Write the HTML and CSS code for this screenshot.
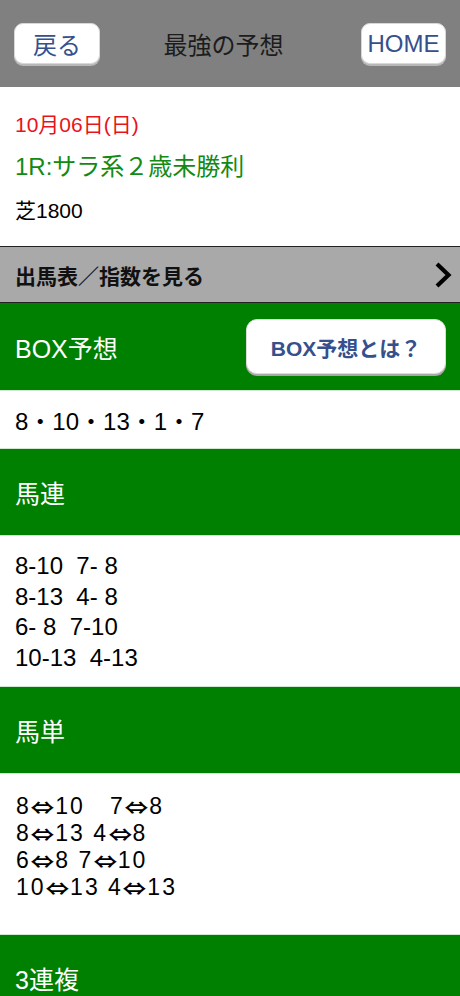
FILE: index.html
```html
<!DOCTYPE html>
<html lang="ja">
<head>
<meta charset="utf-8">
<title>最強の予想</title>
<link rel="stylesheet" href="styles.css">
</head>
<body>
<header class="topbar">
  <a class="navbtn back">戻る</a>
  <h1 class="title">最強の予想</h1>
  <a class="navbtn home">HOME</a>
</header>

<section class="info">
  <p class="date">10月06日(日)</p>
  <p class="race">1R:サラ系２歳未勝利</p>
  <p class="course">芝1800</p>
</section>

<a class="linkbar">
  <span>出馬表／指数を見る</span>
  <svg class="chev" width="18" height="28" viewBox="0 0 18 28"><path d="M3 3 L14.5 14 L3 25" fill="none" stroke="#000" stroke-width="4.2"/></svg>
</a>

<div class="sechead first">
  <span>BOX予想</span>
  <a class="whatbtn">BOX予想とは？</a>
</div>
<div class="secbody box">8・10・13・1・7</div>

<div class="sechead"><span>馬連</span></div>
<div class="secbody list umaren">
  <div class="ln">8-10  7- 8</div>
  <div class="ln">8-13  4- 8</div>
  <div class="ln">6- 8  7-10</div>
  <div class="ln">10-13  4-13</div>
</div>

<div class="sechead"><span>馬単</span></div>
<div class="secbody list umatan">
  <div class="ln">8<span class="arr">⇔</span>10   7<span class="arr">⇔</span>8</div>
  <div class="ln">8<span class="arr">⇔</span>13 4<span class="arr">⇔</span>8</div>
  <div class="ln">6<span class="arr">⇔</span>8 7<span class="arr">⇔</span>10</div>
  <div class="ln">10<span class="arr">⇔</span>13 4<span class="arr">⇔</span>13</div>
</div>

<div class="sechead"><span>3連複</span></div>
</body>
</html>
```

FILE: styles.css
```css
html, body {
  margin: 0;
  padding: 0;
  background: #fff;
}
body {
  width: 460px;
  font-family: "Liberation Sans", "Noto Sans CJK JP", sans-serif;
  color: #000;
}
p { margin: 0; }

.topbar {
  height: 87px;
  background: #808080;
  display: flex;
  align-items: center;
  justify-content: space-between;
  padding: 0 14px;
  box-sizing: border-box;
}
.navbtn {
  height: 41px;
  box-sizing: border-box;
  background: #fff;
  border-radius: 9px;
  border: 1px solid #d8d8d8;
  box-shadow: 0 2px 0 #b8b8b8;
  color: #35508c;
  font-size: 24px;
  display: flex;
  align-items: center;
  justify-content: center;
}
.back { width: 86px; }
.home { width: 85px; }
.title {
  margin: 0 14px 0 0;
  font-size: 24px;
  font-weight: normal;
  color: #1c1c1c;
}

.info {
  height: 159px;
  box-sizing: border-box;
  padding: 25px 15px 0;
}
.date {
  color: #e8141c;
  font-size: 21px;
  line-height: 26px;
}
.race {
  color: #138a13;
  font-size: 24px;
  line-height: 32px;
  margin-top: 13px;
}
.course {
  font-size: 21px;
  line-height: 26px;
  margin-top: 15px;
}

.linkbar {
  height: 57px;
  box-sizing: border-box;
  background: #a9a9a9;
  border-top: 1px solid #222;
  border-bottom: 1px solid #222;
  display: flex;
  align-items: center;
  justify-content: space-between;
  padding: 0 8px 0 15px;
  font-size: 21px;
  font-weight: bold;
  color: #111;
}
.chev { display: block; }

.sechead {
  height: 87px;
  background: #008000;
  color: #fff;
  font-size: 25px;
  display: flex;
  align-items: center;
  justify-content: space-between;
  padding: 0 14px 0 15px;
  box-sizing: border-box;
  border-bottom: 1px solid #cfe8cf;
}
.sechead.first { height: 88px; }
.whatbtn {
  width: 200px;
  height: 55px;
  box-sizing: border-box;
  background: #fff;
  border-radius: 11px;
  border: 1px solid #ddd;
  box-shadow: 0 2px 0 #a8a8a8;
  color: #35508c;
  font-size: 21px;
  font-weight: bold;
  display: flex;
  align-items: center;
  justify-content: center;
}

.secbody {
  padding: 0 15px;
  font-size: 24px;
  border-bottom: 1px solid #cfe8cf;
}
.box {
  height: 58px;
  box-sizing: border-box;
  display: flex;
  align-items: center;
}
.ln { white-space: pre; }
.umaren {
  line-height: 30.5px;
  padding-top: 15px;
  height: 151px;
  box-sizing: border-box;
}
.umatan {
  font-size: 23px;
  letter-spacing: 2px;
  line-height: 26px;
  padding-top: 19px;
  padding-left: 16px;
  height: 161px;
  box-sizing: border-box;
}
.arr {
  display: inline-block;
  width: 17px;
  margin: 0 4px 0 3.5px;
  text-align: center;
  font-family: "Noto Sans CJK JP", sans-serif;
  font-size: 17px;
  font-weight: bold;
  line-height: 26px;
  letter-spacing: 0;
  transform: scaleX(1.4);
}
```
